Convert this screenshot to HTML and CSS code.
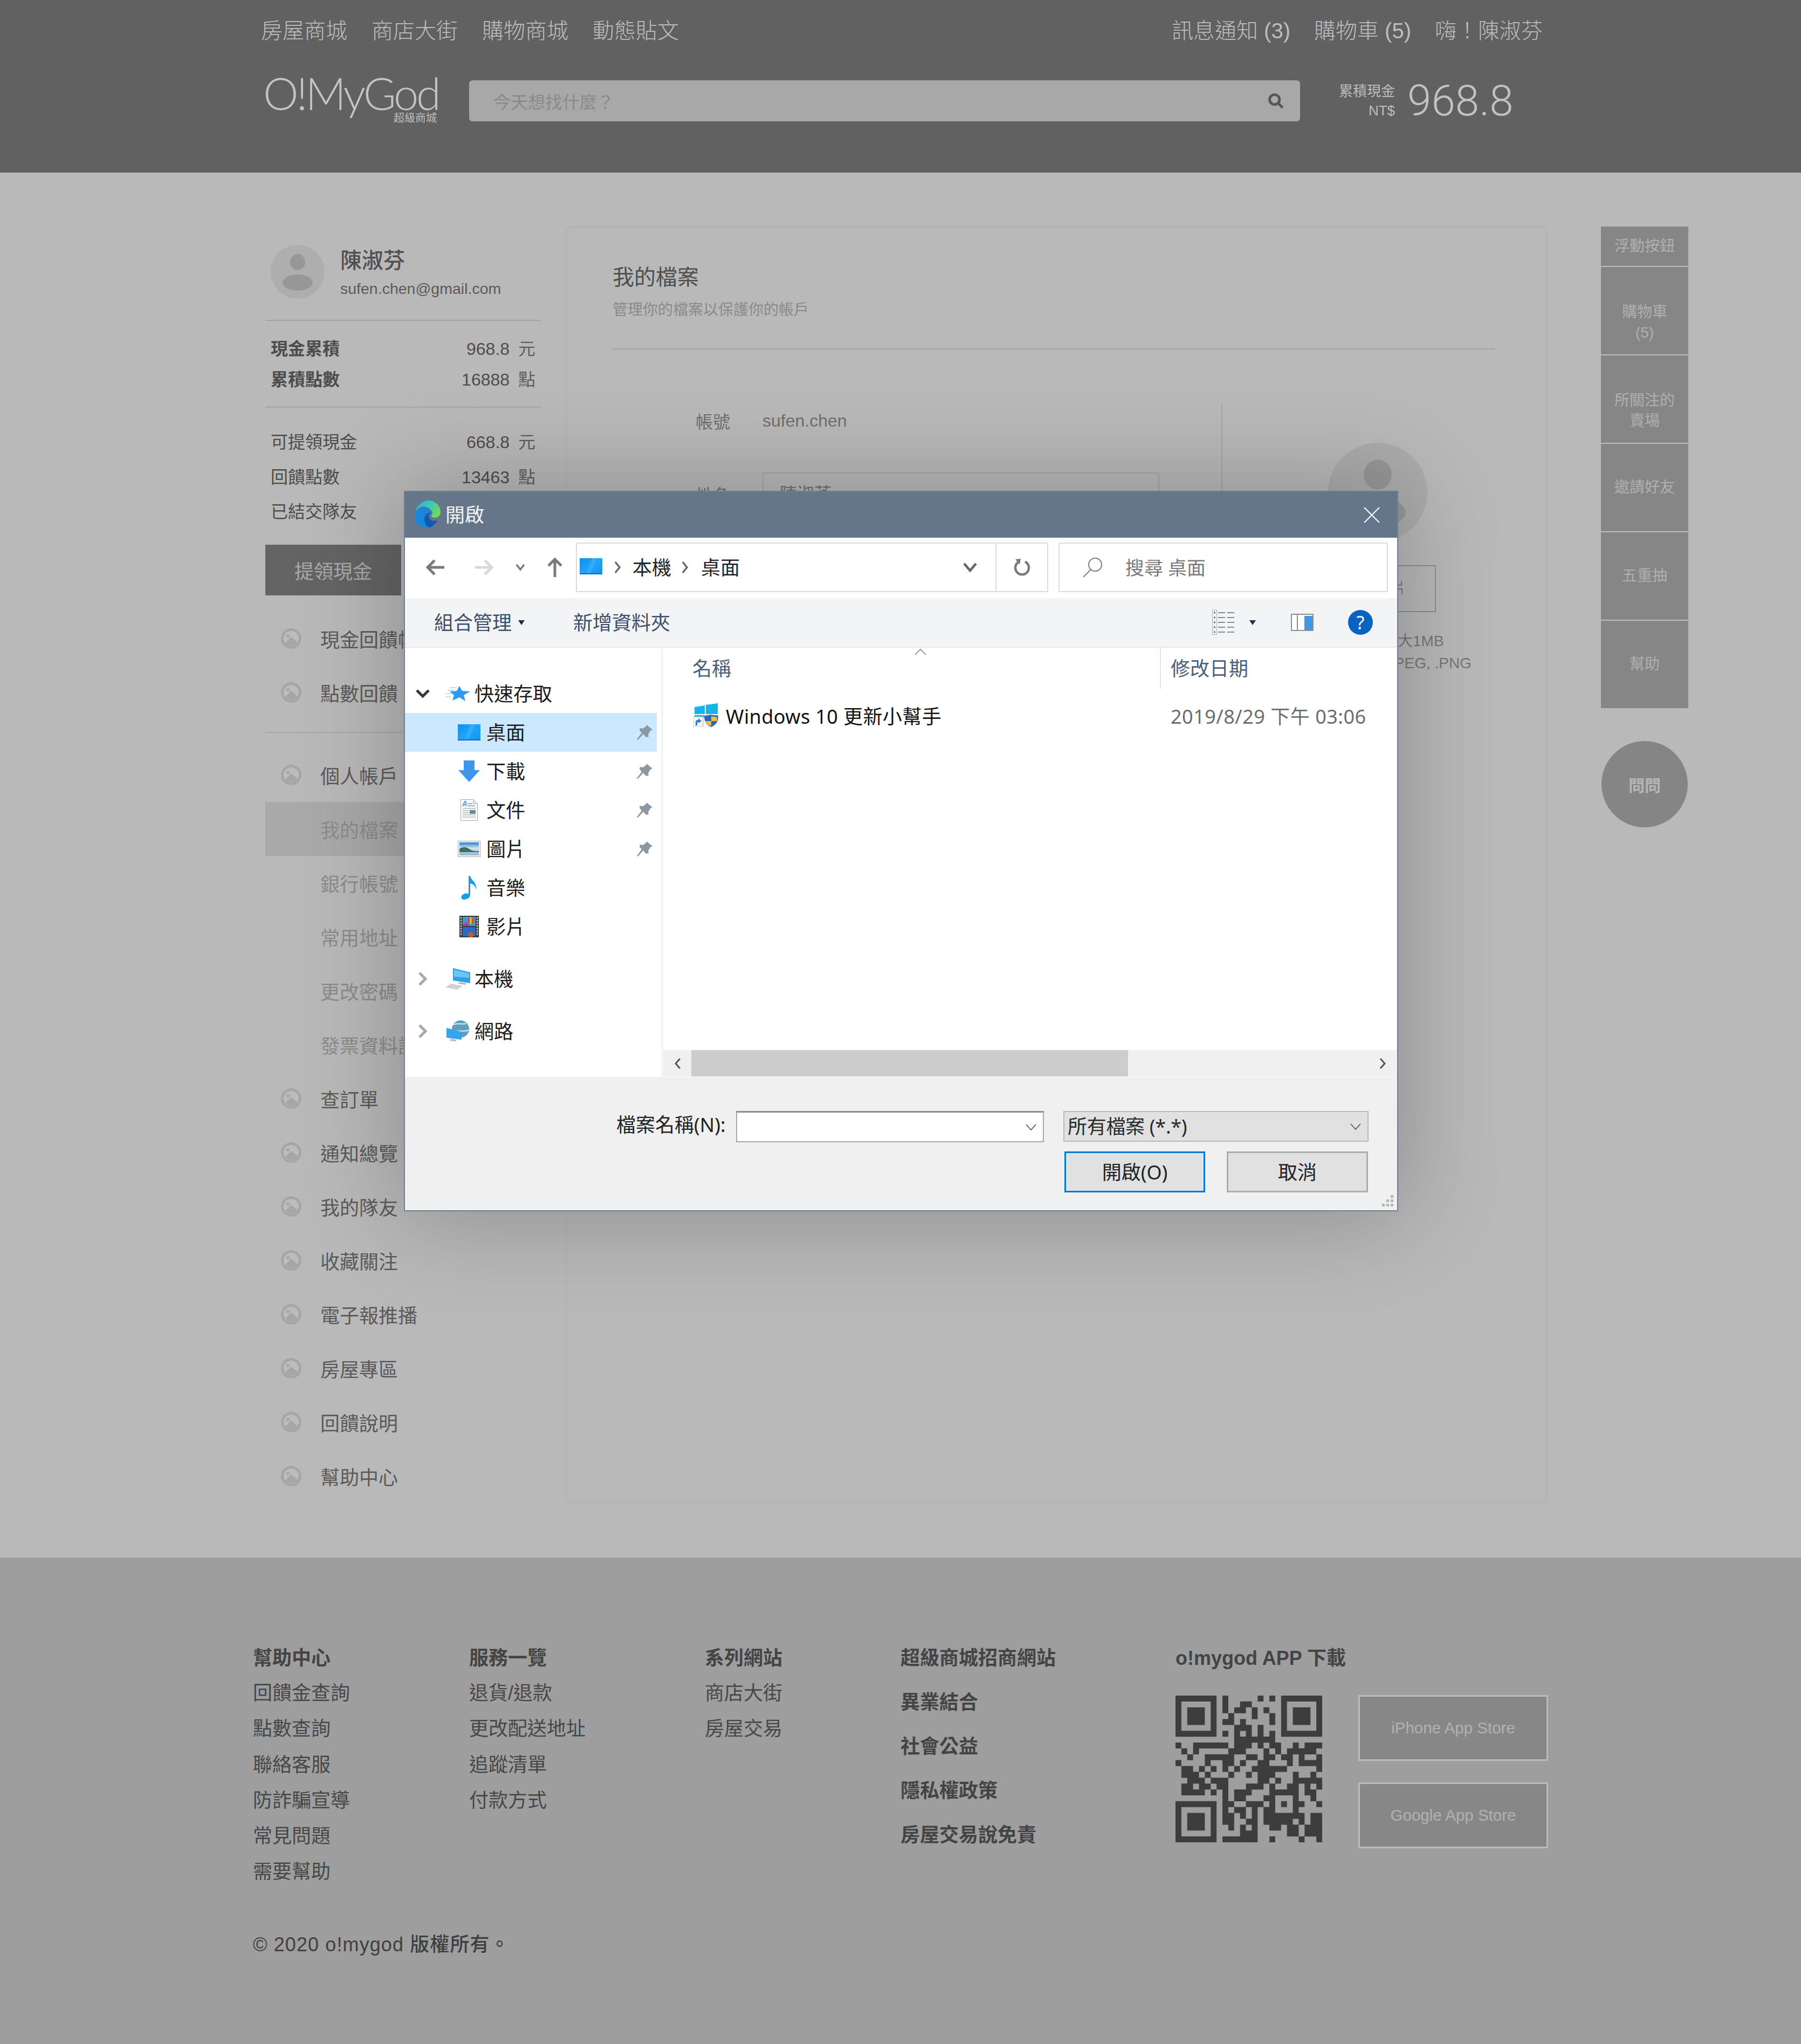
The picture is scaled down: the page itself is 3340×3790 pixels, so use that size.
FILE: index.html
```html
<!DOCTYPE html>
<html lang="zh-Hant">
<head>
<meta charset="utf-8">
<title>O!MyGod 我的檔案</title>
<link rel="stylesheet" href="styles.css">
</head>
<body>
<svg class="defs" aria-hidden="true">
  <defs>
    <linearGradient id="edgeTop" x1="0" y1="0" x2="1" y2="0.5"><stop offset="0" stop-color="#2aaee0"/><stop offset="0.55" stop-color="#38c8c0"/><stop offset="1" stop-color="#6cdc5c"/></linearGradient>
    <linearGradient id="deskFill" x1="0" y1="0" x2="1" y2="1"><stop offset="0" stop-color="#0f8ff0"/><stop offset="0.5" stop-color="#1ea4fb"/><stop offset="1" stop-color="#0f96f4"/></linearGradient>
    <linearGradient id="skyFill" x1="0" y1="0" x2="0" y2="1"><stop offset="0" stop-color="#2f7fd0"/><stop offset="0.45" stop-color="#cfe4ee"/><stop offset="1" stop-color="#8fb6cc"/></linearGradient>
    <symbol id="i-menu" viewBox="0 0 40 40">
      <circle cx="20" cy="20" r="19" fill="#a6a6a6"/>
      <circle cx="20" cy="20" r="14" fill="#bcbcbc"/>
      <path d="M9 28 20 17 32 27 A14 14 0 0 1 9 28Z" fill="#a6a6a6"/>
      <circle cx="14" cy="15" r="3" fill="#a6a6a6"/>
    </symbol>
    <symbol id="i-person" viewBox="0 0 100 100">
      <ellipse cx="50" cy="32" rx="14" ry="15" fill="#979797"/>
      <ellipse cx="50" cy="70" rx="28" ry="15" fill="#979797"/>
    </symbol>
    <symbol id="i-desktop" viewBox="0 0 42 30">
      <rect width="42" height="30" fill="url(#deskFill)"/>
      <path d="M0 28h42v2H0z" fill="#0a6fc4"/>
      <path d="M24 0h8L20 28h-8z" fill="#4db8fc" opacity=".45"/>
    </symbol>
    <symbol id="i-pin" viewBox="0 0 30 30">
      <path d="M18 1 29 10 25 12 21 19 22 23 17 24 12 18 2 29 0 28 9 16 5 11 6 7 11 8 17 4Z" fill="#8b98a1"/>
    </symbol>
    <symbol id="i-star" viewBox="0 0 46 28">
      <path d="M26 0 31 9 46 10 34 17 37 28 26 21 13 27 16 17 8 10 21 9Z" fill="#2b9cf0"/>
      <path d="M8 3h13M4 8h12M2 14h10M0 20h10" stroke="#a9d8fa" stroke-width="1.5"/>
    </symbol>
    <symbol id="i-down" viewBox="0 0 40 40">
      <path d="M10 0H30V18H40L20 40 0 18H10Z" fill="#3f95e8"/>
    </symbol>
    <symbol id="i-doc" viewBox="0 0 32 40">
      <path d="M.5.5H24L31.500 8V39.500H.5Z" fill="#fbfbfb" stroke="#a8a8a8"/>
      <path d="M24 .5V8h7.500" fill="#e3e3e3" stroke="#a8a8a8"/>
      <path d="M4 13 8 4h2v9M5 10h5" stroke="#3a8fe0" stroke-width="1.600" fill="none"/>
      <path d="M13 8h9M13 12h14" stroke="#5aa0e0" stroke-width="1.500"/>
      <path d="M4 17h24M4 21h12M4 25h12M4 29h24M4 33h24" stroke="#b5b5b5" stroke-width="1.500"/>
      <rect x="17" y="20" width="11" height="7" fill="#5f8f8f"/>
    </symbol>
    <symbol id="i-pics" viewBox="0 0 42 30">
      <rect x=".5" y=".5" width="41" height="29" fill="#f3f3f3" stroke="#a9a9a9"/>
      <rect x="3" y="3" width="36" height="24" fill="url(#skyFill)"/>
      <path d="M3 15C10 10 17 12 24 17 30 20 35 19 39 19V21H3Z" fill="#3f6f5c"/>
    </symbol>
    <symbol id="i-note" viewBox="0 0 30 44">
      <path d="M14 0h3C18 8 30 12 28 26 27 18 22 15 17 14V35C17 41 10 44 5 44 0 44-1 38 3 35 7 32 11 32 14 33Z" fill="#139df0"/>
    </symbol>
    <symbol id="i-film" viewBox="0 0 36 40">
      <rect width="36" height="40" fill="#3a3a3a"/>
      <rect x="6" y="2" width="24" height="17" fill="#3f9ad0"/>
      <rect x="6" y="21" width="24" height="17" fill="#2a6ac8"/>
      <circle cx="21" cy="9" r="6" fill="#c8582e"/><path d="M21 3v12" stroke="#e8c83a" stroke-width="3"/>
      <path d="M6 17l8-5 5 7H6Z" fill="#b23aa0"/>
      <circle cx="21" cy="35" r="5" fill="#c8582e"/>
      <path d="M2 4h2M2 9h2M2 14h2M2 19h2M2 24h2M2 29h2M2 34h2M32 4h2M32 9h2M32 14h2M32 19h2M32 24h2M32 29h2M32 34h2" stroke="#eee" stroke-width="3"/>
    </symbol>
    <symbol id="i-pc" viewBox="0 0 46 40">
      <path d="M14 0 46 8V28L14 23Z" fill="#2f9fe6"/>
      <path d="M16 3 44 10V18L16 16Z" fill="#6cc6f5"/>
      <path d="M26 26l12 2v3l-15-2Z" fill="#b5b5b5"/>
      <path d="M10 29 32 33 22 40 0 36Z" fill="#d0d3d6"/>
    </symbol>
    <symbol id="i-net" viewBox="0 0 42 40">
      <circle cx="26" cy="16" r="16" fill="#5f9fc4"/>
      <path d="M12 8C20 4 30 8 36 6M16 20C24 18 32 22 41 18" stroke="#d8ecf7" stroke-width="2" fill="none"/>
      <path d="M0 14 28 21V36L0 32Z" fill="#37a5ec"/>
      <path d="M8 34l10 2v3l-12-1Z" fill="#bdbdbd"/>
    </symbol>
    <symbol id="i-win" viewBox="0 0 47 44">
      <path d="M2 7 21 4V20H2ZM23 3 45 0V20H23ZM2 22H21V26H2ZM23 22H45V26H23Z" fill="#17b4e8"/>
      <rect x="0" y="25" width="18" height="19" fill="#f4f4f4" stroke="#aaa"/>
      <path d="M4 41V35C4 32 6 31 9 31V28L15 33 9 37V34C7 34 7 36 7 41Z" fill="#2f78c0"/>
      <path d="M20 24 32 21 46 24C46 34 42 40 33 44 24 40 20 34 20 24Z" fill="#2a66b8"/>
      <path d="M33 24V33H44C43 28 44 26 44 26ZM22 33H33V42C27 40 23 37 22 33Z" fill="#f7c22d"/>
    </symbol>
  </defs>
</svg>

<header class="site-header">
  <div class="top-links">
    <nav class="link-group">
      <a>房屋商城</a><a>商店大街</a><a>購物商城</a><a>動態貼文</a>
    </nav>
    <nav class="link-group link-group-right">
      <a>訊息通知 (3)</a><a>購物車 (5)</a><a>嗨！陳淑芬</a>
    </nav>
  </div>
  <div class="brand-row">
    <div class="logo">
      <span class="logo-mark">O!MyGod</span>
      <span class="logo-sub">超級商城</span>
    </div>
    <div class="search">
      <span class="search-text">今天想找什麼？</span>
      <svg class="search-icon" viewBox="0 0 26 26"><circle cx="11" cy="11" r="8" fill="none" stroke="#555" stroke-width="4"/><path d="M17 17l7 7" stroke="#555" stroke-width="4"/></svg>
    </div>
    <div class="cash">
      <div class="cash-label"><span>累積現金</span><span>NT$</span></div>
      <div class="cash-value">968.8</div>
    </div>
  </div>
</header>

<main class="page">
  <aside class="sidebar">
    <div class="profile">
      <div class="avatar"><svg class="avatar-icon"><use href="#i-person"/></svg></div>
      <div>
        <div class="profile-name">陳淑芬</div>
        <div class="profile-mail">sufen.chen@gmail.com</div>
      </div>
    </div>
    <div class="stats stats-main">
      <div class="stat"><span>現金累積</span><span class="stat-value">968.8 <i>元</i></span></div>
      <div class="stat"><span>累積點數</span><span class="stat-value">16888 <i>點</i></span></div>
    </div>
    <div class="stats stats-sub">
      <div class="stat"><span>可提領現金</span><span class="stat-value">668.8 <i>元</i></span></div>
      <div class="stat"><span>回饋點數</span><span class="stat-value">13463 <i>點</i></span></div>
      <div class="stat"><span>已結交隊友</span><span class="stat-value">28 <i>位</i></span></div>
    </div>
    <button class="withdraw">提領現金</button>
    <ul class="menu menu-first">
      <li><svg class="menu-icon"><use href="#i-menu"/></svg>現金回饋帳戶</li>
      <li><svg class="menu-icon"><use href="#i-menu"/></svg>點數回饋</li>
    </ul>
    <ul class="menu menu-second">
      <li><svg class="menu-icon"><use href="#i-menu"/></svg>個人帳戶</li>
      <li class="sub sub-active">我的檔案</li>
      <li class="sub">銀行帳號</li>
      <li class="sub">常用地址</li>
      <li class="sub">更改密碼</li>
      <li class="sub">發票資料設定</li>
      <li><svg class="menu-icon"><use href="#i-menu"/></svg>查訂單</li>
      <li><svg class="menu-icon"><use href="#i-menu"/></svg>通知總覽</li>
      <li><svg class="menu-icon"><use href="#i-menu"/></svg>我的隊友</li>
      <li><svg class="menu-icon"><use href="#i-menu"/></svg>收藏關注</li>
      <li><svg class="menu-icon"><use href="#i-menu"/></svg>電子報推播</li>
      <li><svg class="menu-icon"><use href="#i-menu"/></svg>房屋專區</li>
      <li><svg class="menu-icon"><use href="#i-menu"/></svg>回饋說明</li>
      <li><svg class="menu-icon"><use href="#i-menu"/></svg>幫助中心</li>
    </ul>
  </aside>

  <section class="card">
    <h1 class="card-title">我的檔案</h1>
    <p class="card-sub">管理你的檔案以保護你的帳戶</p>
    <div class="form-area">
      <div class="form-col">
        <div class="form-row"><span class="form-label">帳號</span><span>sufen.chen</span></div>
        <div class="form-row form-row-input"><span class="form-label">姓名</span><div class="form-input">陳淑芬</div></div>
      </div>
      <div class="photo-col">
        <div class="photo">
          <div class="photo-avatar"><svg class="photo-icon"><use href="#i-person"/></svg></div>
          <div class="photo-btn">選擇圖片</div>
          <div class="photo-note">檔案大小：最大1MB<br>檔案格式：.JPEG, .PNG</div>
        </div>
      </div>
    </div>
  </section>

  <aside class="float-col">
    <div class="float-stack">
      <div class="float-item float-head">浮動按鈕</div>
      <div class="float-item float-two">購物車<br>(5)</div>
      <div class="float-item float-two">所關注的<br>賣場</div>
      <div class="float-item">邀請好友</div>
      <div class="float-item">五重抽</div>
      <div class="float-item">幫助</div>
    </div>
    <div class="float-ask">問問</div>
  </aside>
</main>

<footer class="footer">
  <div class="footer-cols">
    <div>
      <h3 class="foot-head">幫助中心</h3>
      <ul class="foot-list"><li>回饋金查詢</li><li>點數查詢</li><li>聯絡客服</li><li>防詐騙宣導</li><li>常見問題</li><li>需要幫助</li></ul>
    </div>
    <div>
      <h3 class="foot-head">服務一覽</h3>
      <ul class="foot-list"><li>退貨/退款</li><li>更改配送地址</li><li>追蹤清單</li><li>付款方式</li></ul>
    </div>
    <div>
      <h3 class="foot-head">系列網站</h3>
      <ul class="foot-list"><li>商店大街</li><li>房屋交易</li></ul>
    </div>
    <div class="foot-bold">
      <h3 class="foot-head">超級商城招商網站</h3>
      <h3 class="foot-head">異業結合</h3>
      <h3 class="foot-head">社會公益</h3>
      <h3 class="foot-head">隱私權政策</h3>
      <h3 class="foot-head">房屋交易說免責</h3>
    </div>
    <div>
      <h3 class="foot-head">o!mygod APP 下載</h3>
      <div class="app-row">
        <svg class="qr" viewBox="0 0 25 25"><path d="M0 .5h7M8 .5h1M14 .5h1M16 .5h1M18 .5h7M0 1.500h1M6 1.500h1M8 1.500h1M11 1.500h2M18 1.500h1M24 1.500h1M0 2.500h1M2 2.500h3M6 2.500h1M8 2.500h1M10 2.500h2M13 2.500h1M15 2.500h1M18 2.500h1M20 2.500h3M24 2.500h1M0 3.500h1M2 3.500h3M6 3.500h1M9 3.500h1M13 3.500h1M16 3.500h1M18 3.500h1M20 3.500h3M24 3.500h1M0 4.500h1M2 4.500h3M6 4.500h1M8 4.500h2M11 4.500h1M16 4.500h1M18 4.500h1M20 4.500h3M24 4.500h1M0 5.500h1M6 5.500h1M10 5.500h3M14 5.500h1M18 5.500h1M24 5.500h1M0 6.500h7M8 6.500h1M10 6.500h1M12 6.500h1M14 6.500h1M16 6.500h1M18 6.500h7M10 7.500h7M0 8.500h1M3 8.500h6M10 8.500h3M14 8.500h1M16 8.500h2M20 8.500h1M22 8.500h3M1 9.500h1M3 9.500h1M9 9.500h3M15 9.500h1M17 9.500h1M19 9.500h5M2 10.500h1M5 10.500h5M12 10.500h2M15 10.500h2M18 10.500h2M21 10.500h1M24 10.500h1M0 11.500h1M5 11.500h1M8 11.500h2M11 11.500h1M14 11.500h2M19 11.500h1M21 11.500h4M1 12.500h2M4 12.500h1M6 12.500h1M8 12.500h1M10 12.500h1M13 12.500h6M24 12.500h1M1 13.500h3M5 13.500h1M9 13.500h1M12 13.500h1M14 13.500h3M20 13.500h1M23 13.500h1M2 14.500h3M6 14.500h3M14 14.500h2M17 14.500h1M20 14.500h5M1 15.500h2M4 15.500h2M7 15.500h2M12 15.500h3M16 15.500h1M19 15.500h2M22 15.500h1M24 15.500h1M1 16.500h4M6 16.500h1M8 16.500h1M10 16.500h3M16 16.500h5M22 16.500h2M8 17.500h1M10 17.500h2M15 17.500h2M20 17.500h1M23 17.500h1M0 18.500h7M8 18.500h2M12 18.500h3M16 18.500h1M18 18.500h1M20 18.500h2M24 18.500h1M0 19.500h1M6 19.500h1M8 19.500h1M10 19.500h2M13 19.500h1M15 19.500h2M20 19.500h1M0 20.500h1M2 20.500h3M6 20.500h1M8 20.500h2M11 20.500h1M13 20.500h1M15 20.500h7M23 20.500h2M0 21.500h1M2 21.500h3M6 21.500h1M8 21.500h2M12 21.500h2M15 21.500h5M21 21.500h1M23 21.500h2M0 22.500h1M2 22.500h3M6 22.500h1M9 22.500h1M11 22.500h1M13 22.500h1M16 22.500h2M19 22.500h2M22 22.500h3M0 23.500h1M6 23.500h1M11 23.500h3M19 23.500h2M22 23.500h3M0 24.500h7M8 24.500h6M16 24.500h1M21 24.500h1M24 24.500h1" stroke="#3d3d3d" stroke-width="1.020" fill="none"/></svg>
        <div class="app-buttons">
          <div class="app-btn">iPhone App Store</div>
          <div class="app-btn">Google App Store</div>
        </div>
      </div>
    </div>
  </div>
  <div class="copyright">© 2020 o!mygod 版權所有。</div>
</footer>

<div class="dialog">
  <div class="dlg-title">
    <svg class="edge" viewBox="0 0 70 70">
      <path d="M10 34C11 18 23 8 35 8 47 8 57 18 57 30 57 37 51 40 46 40 41 40 39 37 41 34 43 31 42 28 39 25 35 21 29 19 24 19 16 20 11 27 10 34Z" fill="url(#edgeTop)"/>
      <path d="M9 38C9 27 17 21 26 21 33 21 39 25 41 31 33 29 27 35 27 43 27 50 33 57 43 58 39 59 36 59 33 59 19 59 9 50 9 38Z" fill="#1b86d8"/>
      <path d="M27 43C27 35 33 29 41 31 36 32 34 36 36 40 38 45 45 47 51 45 48 52 42 57 36 58 31 56 27 50 27 43Z" fill="#0f5cae"/>
    </svg>
    <span class="dlg-caption">開啟</span>
    <svg class="dlg-close" viewBox="0 0 30 30"><path d="M1 1 29 29M29 1 1 29" stroke="#fff" stroke-width="2" fill="none"/></svg>
  </div>

  <div class="dlg-toolbar">
    <div class="tool-nav">
      <svg class="tool-arrow" viewBox="0 0 35 30"><path d="M34 15H6M16 2 3 15 16 28" stroke="#7a7a7a" stroke-width="5" fill="none"/></svg>
      <svg class="tool-arrow tool-forward" viewBox="0 0 35 30"><path d="M1 15H29M19 2 32 15 19 28" stroke="#d9d9d9" stroke-width="5" fill="none"/></svg>
      <svg class="tool-small" viewBox="0 0 18 14"><path d="M2 2 9 11 16 2" stroke="#7a7a7a" stroke-width="3.500" fill="none"/></svg>
      <svg class="tool-up" viewBox="0 0 28 36"><path d="M14 36V5M2 15 14 3 26 15" stroke="#7a7a7a" stroke-width="5" fill="none"/></svg>
    </div>
    <div class="address">
      <svg class="addr-icon"><use href="#i-desktop"/></svg>
      <svg class="crumb-sep" viewBox="0 0 14 24"><path d="M3 2 11 12 3 22" stroke="#6a6a6a" stroke-width="3.500" fill="none"/></svg>
      <span class="crumb">本機</span>
      <svg class="crumb-sep crumb-sep-next" viewBox="0 0 14 24"><path d="M3 2 11 12 3 22" stroke="#6a6a6a" stroke-width="3.500" fill="none"/></svg>
      <span class="crumb">桌面</span>
      <svg class="addr-chevron" viewBox="0 0 28 20"><path d="M3 3 14 16 25 3" stroke="#666" stroke-width="4.500" fill="none"/></svg>
      <div class="refresh">
        <svg class="refresh-icon" viewBox="0 0 32 34"><path d="M11 6.500A12.500 12.500 0 1 0 22 6.500" stroke="#7a7a7a" stroke-width="4.500" fill="none"/><path d="M4 2 14 1 12 12Z" fill="#7a7a7a"/></svg>
      </div>
    </div>
    <div class="dlg-search">
      <svg class="dlg-mag" viewBox="0 0 38 38"><circle cx="24" cy="14" r="12" fill="none" stroke="#7f7f7f" stroke-width="2"/><path d="M16 23 2 37" stroke="#7f7f7f" stroke-width="2"/></svg>
      <span class="dlg-search-text">搜尋 桌面</span>
    </div>
  </div>

  <div class="dlg-commands">
    <span class="cmd">組合管理</span>
    <svg class="cmd-caret"><path d="M0 0h12L6 9Z"/></svg>
    <span class="cmd cmd-new">新增資料夾</span>
    <div class="cmd-right">
      <svg class="view-icon" viewBox="0 0 42 46">
        <rect x=".5" y=".5" width="8" height="45" fill="#f7f7f7" stroke="#a9a9a9"/>
        <path d="M3 5h3M3 14h3M3 23h3M3 32h3M3 41h3" stroke="#3f7fc0" stroke-width="3"/>
        <path d="M11 5h13M28 5h13M11 14h13M28 14h13M11 23h13M28 23h13M11 32h13M28 32h13M11 41h13M28 41h13" stroke="#8a8a8a" stroke-width="2"/>
      </svg>
      <svg class="cmd-caret cmd-caret-view"><path d="M0 0h12L6 9Z"/></svg>
      <svg class="pane-icon" viewBox="0 0 42 32">
        <rect x="1" y="1" width="40" height="30" fill="#fff" stroke="#8f8f8f" stroke-width="2"/>
        <rect x="25" y="4" width="15" height="26" fill="#3f97e6"/>
        <path d="M12 1v30" stroke="#8f8f8f" stroke-width="2"/>
      </svg>
      <span class="help">?</span>
    </div>
  </div>

  <div class="dlg-main">
    <div class="tree">
      <div class="tree-row tree-root"><svg class="tree-twist" viewBox="0 0 28 18"><path d="M3 3 14 14 25 3" stroke="#3a3a3a" stroke-width="5" fill="none"/></svg><svg class="tree-icon-root"><use href="#i-star"/></svg><span class="tree-text">快速存取</span></div>
      <div class="tree-row tree-sel"><span class="tree-slot"><svg class="i-wide"><use href="#i-desktop"/></svg></span><span class="tree-text">桌面</span><svg class="pin"><use href="#i-pin"/></svg></div>
      <div class="tree-row"><span class="tree-slot"><svg class="i-down"><use href="#i-down"/></svg></span><span class="tree-text">下載</span><svg class="pin"><use href="#i-pin"/></svg></div>
      <div class="tree-row"><span class="tree-slot"><svg class="i-doc"><use href="#i-doc"/></svg></span><span class="tree-text">文件</span><svg class="pin"><use href="#i-pin"/></svg></div>
      <div class="tree-row"><span class="tree-slot"><svg class="i-wide"><use href="#i-pics"/></svg></span><span class="tree-text">圖片</span><svg class="pin"><use href="#i-pin"/></svg></div>
      <div class="tree-row"><span class="tree-slot"><svg class="i-note"><use href="#i-note"/></svg></span><span class="tree-text">音樂</span></div>
      <div class="tree-row"><span class="tree-slot"><svg class="i-film"><use href="#i-film"/></svg></span><span class="tree-text">影片</span></div>
      <div class="tree-row tree-root tree-gap"><svg class="tree-twist tree-twist-closed" viewBox="0 0 18 28"><path d="M3 3 14 14 3 25" stroke="#a9a9a9" stroke-width="5" fill="none"/></svg><svg class="tree-icon-root"><use href="#i-pc"/></svg><span class="tree-text">本機</span></div>
      <div class="tree-row tree-root tree-gap"><svg class="tree-twist tree-twist-closed" viewBox="0 0 18 28"><path d="M3 3 14 14 3 25" stroke="#a9a9a9" stroke-width="5" fill="none"/></svg><svg class="tree-icon-root"><use href="#i-net"/></svg><span class="tree-text">網路</span></div>
    </div>
    <div class="files">
      <div class="file-grid file-head">
        <span class="col-name">名稱<svg class="sort-mark" viewBox="0 0 22 12"><path d="M1 11 11 1 21 11" stroke="#7d7d7d" stroke-width="1.500" fill="none"/></svg></span>
        <span class="col-date">修改日期</span>
      </div>
      <div class="file-grid file-row">
        <span class="file-name"><svg class="file-icon"><use href="#i-win"/></svg>Windows 10 更新小幫手</span>
        <span class="file-date">2019/8/29 下午 03:06</span>
      </div>
      <div class="hscroll">
        <svg class="hs-arrow" viewBox="0 0 14 22"><path d="M11 2 3 11 11 20" stroke="#555" stroke-width="3" fill="none"/></svg>
        <div class="hs-thumb"></div>
        <svg class="hs-arrow hs-arrow-end" viewBox="0 0 14 22"><path d="M3 2 11 11 3 20" stroke="#555" stroke-width="3" fill="none"/></svg>
      </div>
    </div>
  </div>

  <div class="dlg-bottom">
    <div class="bottom-row">
      <label class="file-label">檔案名稱(N):</label>
      <div class="file-input"><svg class="combo-chev" viewBox="0 0 20 12"><path d="M1 1 10 11 19 1" stroke="#5a5a5a" stroke-width="1.800" fill="none"/></svg></div>
      <div class="file-type"><span class="file-type-text">所有檔案 (*.*)</span><svg class="combo-chev" viewBox="0 0 20 12"><path d="M1 1 10 11 19 1" stroke="#5a5a5a" stroke-width="1.800" fill="none"/></svg></div>
    </div>
    <div class="bottom-actions">
      <button class="dlg-btn dlg-btn-primary">開啟(O)</button>
      <button class="dlg-btn">取消</button>
    </div>
    <svg class="grip" viewBox="0 0 26 26"><path d="M18 2h5v5h-5zM18 10h5v5h-5zM10 10h5v5h-5zM18 18h5v5h-5zM10 18h5v5h-5zM2 18h5v5H2z" fill="#b5b5b5"/></svg>
  </div>
</div>
</body>
</html>
```

FILE: styles.css
```css
* { box-sizing: border-box; }
html, body { margin: 0; padding: 0; }
body {
  position: relative;
  width: 3340px;
  height: 3790px;
  overflow: hidden;
  background: #b9b9b9;
  color: #4f4f4f;
  font-family: "Liberation Sans", "Noto Sans CJK TC", sans-serif;
}
ul { list-style: none; margin: 0; padding: 0; }
h1, h3, p { margin: 0; }
i { font-style: normal; }
button { font-family: inherit; }
.defs { display: block; width: 0; height: 0; }

/* header */
.site-header { height: 320px; background: #616161; padding: 0 479px 0 484px; color: #bdbdbd; }
.top-links { height: 112px; padding-bottom: 4px; display: flex; justify-content: space-between; align-items: center; font-size: 40px; font-weight: 300; }
.link-group { display: flex; gap: 45px; }
.link-group-right { gap: 44px; }
.brand-row { height: 150px; display: flex; align-items: center; }
.logo { width: 322px; margin-left: 4px; align-self: flex-start; padding-top: 25px; display: flex; flex-direction: column; align-items: flex-end; }
.logo-mark { width: 100%; font-family: Lato, sans-serif; font-weight: 300; font-size: 83px; line-height: 70px; letter-spacing: -4.200px; color: #c4c4c4; white-space: nowrap; }
.logo-sub { font-size: 20px; line-height: 22px; margin-top: 1px; }
.search { width: 1541px; height: 76px; margin-left: 60px; background: #a8a8a8; border-radius: 6px; display: flex; align-items: center; justify-content: space-between; padding: 0 30px 0 45px; }
.search-text { font-size: 32px; color: #8a8a8a; }
.search-icon { width: 30px; height: 30px; }
.cash { display: flex; align-items: center; margin-left: 72px; }
.cash-label { width: 104px; display: flex; flex-direction: column; align-items: flex-end; font-size: 26px; line-height: 36px; }
.cash-value { margin-left: 23px; font-family: Roboto, sans-serif; font-weight: 300; font-size: 80px; line-height: 80px; color: #c2c2c2; }

/* page */
.page { display: flex; padding: 100px 0 100px 492px; height: 2568px; }
.sidebar { width: 512px; }
.profile { display: flex; gap: 29px; padding: 34px 10px 39px; border-bottom: 2px solid #a5a5a5; height: 175px; }
.avatar { width: 100px; height: 100px; border-radius: 50%; background: #aeaeae; flex: none; }
.avatar-icon { display: block; width: 100px; height: 100px; }
.profile-name { font-size: 40px; line-height: 48px; font-weight: 500; margin-top: 5px; color: #505050; }
.profile-mail { font-size: 28.500px; line-height: 44px; margin-top: 6px; color: #5a5a5a; }
.stats { padding: 0 11px 0 10px; font-size: 32px; color: #4d4d4d; }
.stats-main { padding-top: 22px; padding-bottom: 23px; border-bottom: 2px solid #a5a5a5; font-weight: 700; }
.stats-main .stat { height: 57px; }
.stats-sub { padding-top: 31px; }
.stats-sub .stat { height: 64.500px; }
.stat { display: flex; justify-content: space-between; align-items: center; padding-bottom: 4px; }
.stat-value { font-weight: 400; }
.stat-value i { color: #5e5e5e; margin-left: 7px; }
.withdraw { display: block; width: 252px; height: 94px; margin-top: 29px; border: 0; background: #646464; color: #a9a9a9; font-size: 36px; padding: 0; }
.menu li { height: 100px; display: flex; align-items: center; padding-left: 28px; font-size: 36px; color: #5a5a5a; white-space: nowrap; overflow: hidden; }
.menu-first { margin-top: 30px; padding-bottom: 23px; border-bottom: 2px solid #a8a8a8; }
.menu-second { margin-top: 28px; }
.menu-icon { width: 40px; height: 40px; flex: none; margin-right: 34px; }
.menu .sub { padding-left: 102px; color: #8c8c8c; }
.menu .sub-active { background: #a9a9a9; }

.card { width: 1820px; margin-left: 45px; height: 2367px; border: 2px solid #b2b2b2; border-radius: 8px; padding: 64px 95px 0 85px; }
.card-title { font-size: 40px; line-height: 56px; font-weight: 400; color: #4f4f4f; }
.card-sub { font-size: 28px; line-height: 40px; margin-top: 13px; padding-bottom: 51px; border-bottom: 2px solid #a3a3a3; color: #8a8a8a; }
.form-area { display: flex; margin-top: 101px; font-size: 32px; color: #6f6f6f; }
.form-col { width: 1131px; height: 1000px; border-right: 2px solid #a6a6a6; padding-left: 154px; }
.form-row { display: flex; align-items: center; height: 62px; }
.form-label { width: 124px; color: #6f6f6f; }
.form-row-input { height: 80px; margin-top: 65px; }
.form-input { width: 736px; height: 80px; border: 2px solid #a6a6a6; padding-left: 30px; line-height: 76px; }
.photo-col { padding-left: 157px; }
.photo { width: 262px; display: flex; flex-direction: column; align-items: center; padding-top: 72px; }
.photo-avatar { width: 184px; height: 184px; border-radius: 50%; background: #acacac; flex: none; }
.photo-icon { display: block; width: 184px; height: 184px; }
.photo-btn { width: 216px; height: 87px; margin-top: 43px; border: 2px solid #8f8f8f; text-align: center; line-height: 83px; font-size: 26px; color: #7a7a7a; }
.photo-note { align-self: flex-start; margin-top: 33px; font-size: 28px; line-height: 41px; white-space: nowrap; color: #777; }

.float-col { width: 162px; margin-left: 100px; }
.float-item { height: 164px; background: #868686; color: #b0b0b0; font-size: 28px; line-height: 38px; display: flex; align-items: center; justify-content: center; text-align: center; border-bottom: 2px solid #bdbdbd; }
.float-item:last-child { border-bottom: 0; height: 162px; }
.float-head { height: 75px; }
.float-two { padding-top: 44px; }
.float-ask { width: 160px; height: 160px; margin: 61px 0 0 1px; border-radius: 50%; background: #858585; color: #b5b5b5; font-size: 30px; font-weight: 700; display: flex; align-items: center; justify-content: center; }

/* footer */
.footer { height: 902px; background: #9e9e9e; padding: 162px 0 0 469px; color: #3e3e3e; }
.footer-cols { display: grid; grid-template-columns: 401px 437px 363px 510px 691px; height: 453px; }
.foot-head { font-size: 36px; line-height: 50px; font-weight: 700; color: #444; white-space: nowrap; }
.foot-list { margin-top: 7px; }
.foot-list li { font-size: 36px; line-height: 66.300px; color: #474747; }
.foot-bold { display: flex; flex-direction: column; gap: 32px; }
.app-row { display: flex; margin-top: 44px; }
.qr { width: 272px; height: 272px; flex: none; }
.app-buttons { margin: -1px 0 0 67px; display: flex; flex-direction: column; gap: 40px; }
.app-btn { width: 352px; height: 122px; border: 3px solid #bbb; background: #878787; color: #b2b2b2; font-size: 29.500px; display: flex; align-items: center; justify-content: center; }
.copyright { margin-top: 78px; font-size: 36px; line-height: 50px; font-weight: 500; letter-spacing: 1.100px; color: #3f3f3f; }

/* dialog */
.dialog {
  position: absolute; left: 749px; top: 910px; width: 1844px; height: 1336px;
  border: 2px solid #6f7f93; background: #fff;
  box-shadow: 0 0 170px 10px rgba(0, 0, 0, .24);
  color: #1a1a1a;
  font-family: "Noto Sans", "Noto Sans CJK TC", sans-serif;
  font-size: 36px;
}
.dlg-title { height: 85px; background: #65758a; display: flex; align-items: center; padding: 0 32px 0 9px; color: #f2f2f2; }
.edge { width: 70px; height: 70px; flex: none; }
.dlg-caption { margin-left: -4px; padding-bottom: 4px; }
.dlg-close { width: 30px; height: 30px; margin-left: auto; }
.dlg-toolbar { height: 112px; display: flex; padding: 9px 17px 11px 0; }
.tool-nav { width: 317px; display: flex; align-items: center; padding-left: 39px; }
.tool-arrow { width: 35px; height: 30px; }
.tool-forward { margin-left: 55px; }
.tool-small { width: 18px; height: 14px; margin-left: 41px; }
.tool-up { width: 28px; height: 36px; margin-left: 41px; }
.address { width: 876px; border: 2px solid #dcdcdc; display: flex; align-items: center; padding-left: 5px; }
.addr-icon { width: 42px; height: 30px; flex: none; margin-top: -4px; }
.crumb-sep { width: 14px; height: 24px; margin: 0 21px 0 21px; flex: none; }
.crumb-sep-next { margin: 0 23px 0 18px; }
.crumb { color: #222; padding-bottom: 4px; }
.addr-chevron { width: 28px; height: 20px; margin-left: auto; margin-right: 33px; }
.refresh { width: 96px; height: 100%; border-left: 2px solid #dcdcdc; display: flex; align-items: center; justify-content: center; }
.refresh-icon { width: 32px; height: 34px; }
.dlg-search { width: 611px; margin-left: 19px; border: 2px solid #dcdcdc; display: flex; align-items: center; padding-left: 42px; color: #7a7a7a; font-size: 35px; }
.dlg-search-text { padding-bottom: 4px; }
.dlg-mag { width: 38px; height: 38px; margin-right: 42px; flex: none; }
.dlg-commands { height: 92px; background: #f3f4f6; border-bottom: 2px solid #e9e9e9; display: flex; align-items: center; padding: 0 45px 0 54px; color: #3b4f6b; }
.cmd { padding-bottom: 4px; }
.cmd-caret { width: 12px; height: 9px; margin-left: 12px; fill: #1f2f4a; flex: none; }
.cmd-new { margin-left: 90px; }
.cmd-right { margin-left: auto; display: flex; align-items: center; }
.view-icon { width: 42px; height: 46px; }
.cmd-caret-view { margin-left: 27px; }
.pane-icon { width: 42px; height: 32px; margin-left: 65px; }
.help { width: 46px; height: 46px; margin-left: 64px; border-radius: 50%; background: #0a63c0; color: #fff; font-size: 34px; line-height: 46px; text-align: center; }
.dlg-main { height: 796px; display: flex; }
.tree { width: 479px; padding-top: 49px; border-right: 4px solid #f5f5f5; flex: none; }
.tree-row { height: 72px; width: 467px; display: flex; align-items: center; position: relative; color: #1c1c1c; }
.tree-sel { background: #cce8ff; }
.tree-gap { margin-top: 25px; }
.tree-text { padding-bottom: 4px; }
.tree-slot { width: 151px; padding-left: 86px; display: flex; justify-content: center; flex: none; }
.i-wide { width: 42px; height: 30px; }
.i-down { width: 40px; height: 40px; }
.i-doc { width: 32px; height: 40px; }
.i-note { width: 30px; height: 44px; }
.i-film { width: 36px; height: 40px; }
.pin { width: 30px; height: 30px; margin-left: auto; margin-right: 7px; }
.tree-twist { width: 28px; height: 18px; margin-left: 19px; flex: none; }
.tree-twist-closed { width: 18px; height: 28px; margin-left: 24px; margin-right: 5px; }
.tree-icon-root { width: 46px; height: 40px; margin: 0 8px 0 28px; flex: none; }
.files { flex: 1; display: flex; flex-direction: column; min-width: 0; }
.file-grid { display: grid; grid-template-columns: 921px 1fr; align-items: center; }
.file-head { height: 76px; color: #4d5f78; }
.col-name { padding: 0 0 4px 54px; height: 100%; display: flex; align-items: center; position: relative; }
.col-date { height: 100%; border-left: 2px solid #e5e5e5; padding: 0 0 4px 18px; display: flex; align-items: center; }
.sort-mark { position: absolute; left: 466px; top: 2px; width: 22px; height: 12px; }
.file-row { height: 72px; margin-top: 15px; }
.file-name { padding: 0 0 4px 56px; display: flex; align-items: center; color: #111; white-space: nowrap; letter-spacing: .4px; }
.file-icon { width: 47px; height: 44px; margin-right: 13px; flex: none; }
.file-date { padding: 0 0 4px 20px; color: #6d6d6d; white-space: nowrap; letter-spacing: .5px; }
.hscroll { height: 49px; margin-top: auto; margin-bottom: 1px; background: #f0f0f0; display: flex; align-items: center; padding-left: 20px; }
.hs-arrow { width: 14px; height: 22px; flex: none; }
.hs-thumb { width: 810px; height: 49px; background: #cdcdcd; margin-left: 18px; }
.hs-arrow-end { margin-left: auto; margin-right: 20px; }
.dlg-bottom { height: 247px; background: #f0f0f0; padding-top: 63px; position: relative; color: #222; }
.bottom-row { display: flex; padding-left: 392px; align-items: flex-start; }
.file-label { width: 222px; white-space: nowrap; line-height: 52px; }
.file-input { width: 571px; height: 58px; background: #fff; border: 2px solid #a9a9a9; border-top: 3px solid #8c8c8c; display: flex; align-items: center; justify-content: flex-end; padding-right: 12px; }
.file-type { width: 566px; height: 57px; margin-left: 36px; background: #e1e1e1; border: 2px solid #b9b9b9; display: flex; align-items: center; justify-content: space-between; padding: 0 12px 0 6px; color: #2a2a2a; }
.file-type-text { padding-bottom: 4px; letter-spacing: -.3px; }
.combo-chev { width: 20px; height: 12px; flex: none; }
.bottom-actions { display: flex; gap: 40px; margin-top: 17px; padding-left: 1223px; }
.dlg-btn { width: 262px; height: 76px; background: #e1e1e1; border: 3px solid #adadad; color: #222; font-size: 36px; font-family: inherit; padding: 0 0 4px; }
.dlg-btn-primary { width: 261px; border-color: #0078d7; }
.grip { position: absolute; right: 4px; bottom: 4px; width: 26px; height: 26px; }
```
